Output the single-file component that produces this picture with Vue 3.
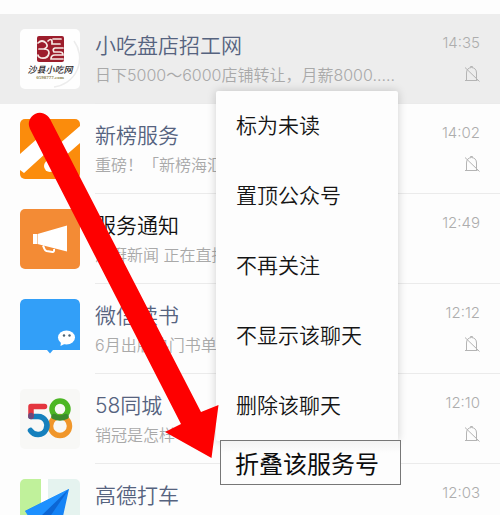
<script setup>
const chats = [
  { id: 'snack', title: '小吃盘店招工网', text: '日下5000～6000店铺转让，月薪8000.....', time: '14:35', muted: true, active: true },
  { id: 'xinbang', title: '新榜服务', text: '重磅！「新榜海汇」', time: '14:02', muted: true },
  { id: 'notice', title: '服务通知', text: '澎湃新闻 正在直播', time: '12:49', plain: true },
  { id: 'read', title: '微信读书', text: '6月出版热门书单', time: '12:12', muted: true },
  { id: 'city', title: '58同城', text: '销冠是怎样', time: '12:10', muted: true },
  { id: 'taxi', title: '高德打车', text: '', time: '12:03' }
]
const actions = ['标为未读', '置顶公众号', '不再关注', '不显示该聊天', '删除该聊天']
</script>

<template>
  <main class="page">
    <ul class="chats">
      <li v-for="c in chats" :key="c.id" class="chat" :class="{ active: c.active }">
        <svg v-if="c.id === 'snack'" class="avatar" viewBox="0 0 60 60" aria-hidden="true">
          <rect width="60" height="60" fill="#fefefe" />
          <path d="M54 12A29 29 0 0 1 34 58" fill="none" stroke="#ececec" stroke-width="1.5" />
          <rect x="17" y="7" width="27" height="26" rx="2" fill="#9c1d2c" />
          <g fill="none" stroke="#f6e9e4" stroke-width="1.7" stroke-linecap="round">
            <path d="M18 14q4-4 8 0q3 4-2 6q5 0 5 4q-1 6-8 5q-3-1-3-3" />
            <path d="M19 20h5M28 12q3-3 4 0v3h8M33 10h8M43 19h-8q-3 1-1 4h6q3 0 3 3h-8q-4 0-4 4h12" />
          </g>
          <text x="30" y="44" class="brush">沙县小吃网</text>
          <text x="30" y="50" class="domain">0598777.com</text>
        </svg>

        <svg v-else-if="c.id === 'xinbang'" class="avatar" viewBox="0 0 60 60" aria-hidden="true">
          <rect width="60" height="60" fill="#fb8c0c" />
          <path d="M0 35L18 19L38 26L60 7V24L44 38L26 34L4 54L0 51Z" fill="#fff" />
          <circle cx="30" cy="47" r="6" fill="#fff" />
        </svg>

        <svg v-else-if="c.id === 'notice'" class="avatar" viewBox="0 0 60 60" aria-hidden="true">
          <rect width="60" height="60" fill="#f38b35" />
          <path d="M13 25h4.500L47 16.500V42.500L17.500 35H13Z" fill="#fff" />
          <path d="M17.500 25v10" stroke="#f8c79c" stroke-width="1" />
          <path d="M23 36.500l1.500 3.500q.5 1.500 2 2l6 1q2 0 1.500-3" fill="none" stroke="#fff" stroke-width="2" />
        </svg>

        <svg v-else-if="c.id === 'read'" class="avatar" viewBox="0 0 60 60" aria-hidden="true">
          <path d="M0 5Q0 0 5 0H55Q60 0 60 5V51H33L30 54.500L27 51H0Z" fill="#329ff8" />
          <ellipse cx="46.500" cy="38.500" rx="8.500" ry="7" fill="#fff" />
          <path d="M41 43l-.5 4l4-2Z" fill="#fff" />
          <circle cx="44" cy="36.500" r="1.200" fill="#4b6272" />
          <circle cx="49.500" cy="36.500" r="1.200" fill="#4b6272" />
        </svg>

        <svg v-else-if="c.id === 'city'" class="avatar" viewBox="0 0 60 60" aria-hidden="true">
          <rect width="60" height="60" fill="#f8f8f6" />
          <g fill="none" stroke-width="5.500" stroke-linecap="round">
            <circle cx="40" cy="37" r="9.500" stroke="#f0962a" />
            <circle cx="40" cy="20" r="8" stroke="#4db625" />
            <path d="M34 27.500q6 3 12 0" stroke="#3b8a2c" />
            <path d="M11 27.500H18a9 9 0 1 1-7.500 14" stroke="#1580bd" />
            <path d="M24.500 17.500H11V27" stroke="#e4363f" stroke-linejoin="round" />
            <path d="M11 26.500v1" stroke="#6b4a7c" />
          </g>
        </svg>

        <svg v-else class="avatar" viewBox="0 0 60 60" aria-hidden="true">
          <rect width="60" height="60" fill="#fff" />
          <path d="M0 0H21V60H0Z" fill="#c0f19b" />
          <path d="M28 0H60V60H28Z" fill="#e5f3ef" />
          <path d="M5 32L49 10L38 60L22 44Z" fill="#1483f6" />
          <path d="M49 10L22 44L20 56L5 32Z" fill="#1d90ff" />
          <path d="M49 10L20 38V52Z" fill="#0c66d4" />
        </svg>

        <div class="body">
          <div class="copy">
            <span class="title" :class="{ plain: c.plain }">{{ c.title }}</span>
            <span class="text">{{ c.text }}</span>
          </div>
          <div class="meta">
            <time class="time">{{ c.time }}</time>
            <svg v-if="c.muted" class="bell" viewBox="0 0 16 18" aria-hidden="true">
              <path d="M1 15.500H13.500M2.500 15V8Q2.500 3 7.500 2.500Q12.500 3 12.500 8V15M6.500 2.500V1.500H8.500V2.500M1 2.500L15.500 16.500" />
            </svg>
          </div>
        </div>
      </li>
    </ul>

    <div class="menu">
      <button v-for="a in actions" :key="a" type="button" class="item">{{ a }}</button>
    </div>
    <button type="button" class="fold">折叠该服务号</button>

    <svg class="arrow" viewBox="0 0 500 515" aria-hidden="true">
      <path d="M30 129A10.500 10.500 0 0 1 50 119L201 412L218.500 405L211.500 458L165 432L181 424Z" fill="#fe0000" />
    </svg>
  </main>
</template>

<style>
body {
  margin: 0;
  background: #fdfdfd;
}
</style>

<style scoped>
.page {
  position: relative;
  box-sizing: border-box;
  height: 100vh;
  padding-top: 14px;
  overflow: hidden;
  background: #fdfdfd;
  font-family: Inter, "Noto Sans CJK SC", sans-serif;
  font-weight: 350;
}
.chats {
  margin: 0;
  padding: 0;
  list-style: none;
}
.chat {
  display: flex;
  align-items: center;
  gap: 15px;
  height: 90px;
  padding-left: 20px;
}
.chat.active {
  background: #ededed;
}
.avatar {
  flex: none;
  width: 60px;
  height: 60px;
  border-radius: 5px;
}
.brush {
  font: italic 500 9px "Noto Sans CJK SC", sans-serif;
  text-anchor: middle;
  fill: #26231f;
}
.domain {
  font: 700 5px "Liberation Serif", serif;
  text-anchor: middle;
  fill: #8d8350;
}
.body {
  display: flex;
  flex: 1;
  justify-content: space-between;
  box-sizing: border-box;
  min-width: 0;
  height: 90px;
  padding: 17px 20px 0 0;
  border-bottom: 1px solid #ebebeb;
}
.copy,
.meta {
  display: flex;
  flex-direction: column;
  white-space: nowrap;
}
.meta {
  align-items: flex-end;
}
.title {
  font-size: 21px;
  line-height: 30px;
  color: #56637f;
}
.title.plain {
  color: #111;
}
.text {
  font-size: 16px;
  line-height: 28px;
  color: #a9a9a9;
}
.time {
  font-size: 15px;
  line-height: 24px;
  color: #adadad;
}
.bell {
  width: 16px;
  height: 18px;
  margin-top: 10px;
  fill: none;
  stroke: #b4b4b4;
  stroke-width: 1;
}
.menu {
  position: absolute;
  top: 91px;
  left: 216px;
  display: flex;
  flex-direction: column;
  width: 182px;
  background: #fdfdfd;
  border-radius: 2px;
  box-shadow: 0 0 10px rgba(0, 0, 0, 0.18);
}
.item {
  height: 70px;
  padding: 0 20px 4px;
  border: 0;
  background: none;
  font: inherit;
  font-size: 21px;
  text-align: left;
  color: #151515;
}
.fold {
  position: absolute;
  top: 440px;
  left: 220px;
  width: 181px;
  height: 45px;
  padding: 0 14px;
  border: 1px solid #777;
  background: linear-gradient(#f3f3f3, #fdfdfd 12px);
  font: inherit;
  font-size: 24px;
  font-weight: 400;
  text-align: left;
  white-space: nowrap;
  color: #0c0c0c;
}
.arrow {
  position: absolute;
  top: 0;
  left: 0;
  width: 500px;
  height: 515px;
  pointer-events: none;
}
</style>
